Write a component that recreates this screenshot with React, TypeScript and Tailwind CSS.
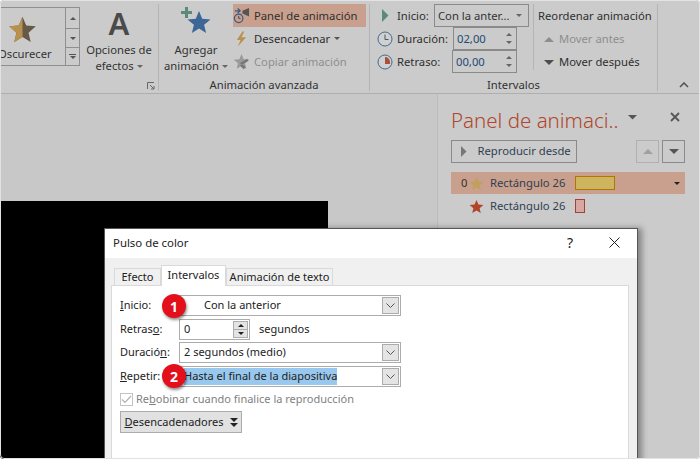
import type { ReactNode } from "react";

const STAR = "M12 1.5l3.1 7.2 7.9.7-6 5.2 1.8 7.7L12 18.2l-6.8 4.1L7 14.6 1 9.4l7.9-.7z";

function Tri({ dir = "down", color = "#555", size = 7 }: { dir?: "down" | "up" | "right"; color?: string; size?: number }) {
  const pts = dir === "down" ? "0,0 8,0 4,4" : dir === "up" ? "0,4 8,4 4,0" : "0,0 4,4 0,8";
  const box = dir === "right" ? "0 0 4 8" : "0 0 8 4";
  return (
    <svg viewBox={box} width={dir === "right" ? size / 2 : size} height={dir === "right" ? size : size / 2} className="inline-block shrink-0">
      <polygon points={pts} fill={color} />
    </svg>
  );
}

function HalfStar() {
  return (
    <svg viewBox="0 0 24 24" width="29" height="29" className="ml-[8px] shrink-0">
      <path d={STAR} fill="#665a46" />
      <path d="M12 1.5L8.9 8.7 1 9.4l6 5.2-1.8 7.7L12 18.2z" fill="#b9914f" />
    </svg>
  );
}

function ClockIcon({ retraso }: { retraso?: boolean }) {
  return (
    <svg viewBox="0 0 16 16" width="16" height="16" className="shrink-0">
      <circle cx="8" cy="8" r="7" fill="#d0d0d0" stroke="#3f6a94" strokeWidth="1" />
      {retraso ? (
        <path d="M8 3a5 5 0 0 1 5 5v2H8z" fill="#a8523c" />
      ) : (
        <path d="M8 3.5V8.5H11.5" fill="none" stroke="#555" strokeWidth="1" />
      )}
    </svg>
  );
}

function SmallBtn({ icon, label, active, muted, caret }: { icon: ReactNode; label: string; active?: boolean; muted?: boolean; caret?: boolean }) {
  return (
    <div className={`flex h-[23px] w-[133px] items-center gap-[4px] ${active ? "bg-[#c9a08d]" : ""} ${muted ? "text-[#8e8e8e]" : "text-[#2f2f2f]"}`}>
      <span className="flex w-[17px] justify-center">{icon}</span>
      <span className="whitespace-nowrap pt-[2px]">{label}</span>
      {caret && <Tri size={6} />}
    </div>
  );
}

function Group({ width, label, children, sep = true }: { width: number; label: string; children: ReactNode; sep?: boolean }) {
  return (
    <div className={`relative flex h-[87px] flex-col ${sep ? "border-r border-[#b4b4b4]" : ""}`} style={{ width }}>
      <div className="flex h-[75px] shrink-0">{children}</div>
      <div className="text-center leading-[12px] text-[#333]">{label}</div>
    </div>
  );
}

function Spin({ value, width }: { value: string; width: number }) {
  return (
    <div className="flex h-[23px] items-center border border-[#8a8a8a] bg-[#cbcbcb] pl-[3px] text-[#1f4a75]" style={{ width }}>
      <span className="flex-1 pt-[2px]">{value}</span>
      <span className="flex w-[14px] flex-col items-center gap-[5px]">
        <Tri dir="up" size={6} color="#666" />
        <Tri size={6} color="#666" />
      </span>
    </div>
  );
}

function Ribbon() {
  return (
    <header className="flex h-[94px] shrink-0 border-b border-[#aeaeae] bg-[#cbcbcb] pt-[4px] text-[11.25px]">
      <Group width={159} label="">
        <div className="mt-[3px] flex h-[59px] w-[66px] flex-col overflow-hidden border-y border-r border-[#8f8f8f] pt-[7px]">
          <HalfStar />
          <span className="mt-[2px] whitespace-nowrap text-[#333] [text-indent:-2px]">Oscurecer</span>
        </div>
        <div className="mt-[3px] flex h-[59px] w-[14px] flex-col border-y border-r border-[#8f8f8f]">
          <span className="flex h-[21px] items-center justify-center border-b border-[#8f8f8f]"><Tri dir="up" size={6} /></span>
          <span className="flex h-[19px] items-center justify-center border-b border-[#8f8f8f]"><Tri size={6} /></span>
          <span className="flex flex-1 flex-col items-center justify-center gap-[1px]"><span className="h-px w-[7px] bg-[#555]" /><Tri size={6} /></span>
        </div>
        <div className="flex w-[78px] flex-col items-center leading-[16px] text-[#333]">
          <span className="flex h-[38px] items-center text-[31px] font-semibold leading-[37px] text-[#4a4a4a]">A</span>
          <span className="whitespace-nowrap">Opciones de</span>
          <span className="flex items-center gap-[3px]">efectos <Tri size={6} color="#666" /></span>
        </div>
        <svg viewBox="0 0 8 8" width="8" height="8" className="absolute left-[147px] top-[78px]">
          <path d="M0.5 7V0.5H7M3 3l4 4M7 4v3H4" fill="none" stroke="#666" strokeWidth="1" />
        </svg>
      </Group>
      <Group width={211} label="Animación avanzada">
        <div className="flex w-[74px] flex-col items-center leading-[16px] text-[#333]">
          <svg viewBox="0 0 32 32" width="32" height="32" className="mb-[4px] mt-[2px]">
            <path d="M19 5l3.2 7.8 8.3.6-6.4 5.3 2 8.2-7.1-4.4-7.1 4.4 2-8.2-6.4-5.3 8.3-.6z" fill="#3b6695" />
            <path d="M5 1h3v4h4v3H8v4H5V8H1V5h4z" fill="#5c8a78" />
          </svg>
          <span>Agregar</span>
          <span className="flex items-center gap-[3px] whitespace-nowrap">animación <Tri size={6} color="#666" /></span>
        </div>
        <div className="flex flex-col">
          <SmallBtn
            active
            label="Panel de animación"
            icon={
              <svg viewBox="0 0 18 18" width="17" height="17">
                <circle cx="6" cy="12" r="4.5" fill="none" stroke="#2f5d8a" strokeWidth="1.3" />
                <path d="M6 9.5V12H8" fill="none" stroke="#444" />
                <path d="M2 4h5M5 1.5L7.5 4 5 6.5" fill="none" stroke="#2f5d8a" strokeWidth="1.3" />
                <path d="M10 4l7-3v9l-7-3z" fill="#555" />
              </svg>
            }
          />
          <SmallBtn
            caret
            label="Desencadenar"
            icon={
              <svg viewBox="0 0 16 16" width="15" height="16">
                <path d="M9 0L3 9h4l-3 7 9-10H8l3-6z" fill="#b9914f" />
              </svg>
            }
          />
          <SmallBtn
            muted
            label="Copiar animación"
            icon={
              <svg viewBox="0 0 24 24" width="17" height="17">
                <path d={STAR} fill="#9a9a9a" />
                <path d="M10 14l10-6 2 3-10 6zM10 18l5 5 3-3-5-5z" fill="#777" />
              </svg>
            }
          />
        </div>
      </Group>
      <Group width={288} label="Intervalos">
        <div className="flex w-[163px] flex-col pl-[7px]">
          <div className="flex h-[23px] items-center">
            <span className="flex w-[20px] justify-start pl-[5px]"><Tri dir="right" size={13} color="#5c8a78" /></span>
            <span className="w-[37px] pt-[2px] text-[#2f2f2f]">Inicio:</span>
            <div className="flex h-[23px] w-[95px] items-center justify-between whitespace-nowrap border border-[#8a8a8a] pl-[3px] pr-[6px] text-[#333]">
              <span className="pt-[2px]">Con la anter...</span><Tri size={6} color="#666" />
            </div>
          </div>
          <div className="flex h-[23px] items-center">
            <span className="w-[20px]"><ClockIcon /></span>
            <span className="w-[56px] pt-[2px] text-[#2f2f2f]">Duración:</span>
            <Spin value="02,00" width={64} />
          </div>
          <div className="flex h-[23px] items-center">
            <span className="w-[20px]"><ClockIcon retraso /></span>
            <span className="w-[55px] pt-[2px] text-[#2f2f2f]">Retraso:</span>
            <Spin value="00,00" width={65} />
          </div>
        </div>
        <div className="h-[66px] border-l border-[#b4b4b4] pl-[4px] text-[#2f2f2f]">
          <div className="flex h-[23px] items-center whitespace-nowrap pt-[2px]">Reordenar animación</div>
          <div className="flex h-[23px] items-center gap-[5px] pl-[6px] pt-[2px] text-[#8e8e8e]"><Tri dir="up" size={10} color="#8e8e8e" />Mover antes</div>
          <div className="flex h-[23px] items-center gap-[5px] pl-[6px] pt-[2px]"><Tri size={10} color="#4d4d4d" />Mover después</div>
        </div>
      </Group>
      <div className="flex flex-1 items-end justify-end pb-[5px] pr-[11px]">
        <svg viewBox="0 0 10 6" width="10" height="6"><path d="M1 5l4-4 4 4" fill="none" stroke="#555" strokeWidth="1.6" /></svg>
      </div>
    </header>
  );
}

function TaskPane() {
  return (
    <aside className="flex w-[263px] shrink-0 flex-col border-l border-[#bcbcbc] bg-[#cbcbcb] pl-[13px] pr-[15px] text-[11.25px] text-[#2f3f52]">
      <div className="relative flex h-[46px] items-center pt-[6px]">
        <span className="whitespace-nowrap text-[20.5px] font-light text-[#b0452a]">Panel de animaci..</span>
        <span className="absolute left-[177px] top-[21px] flex"><Tri size={9} color="#555" /></span>
        <svg viewBox="0 0 10 10" width="10" height="10" className="absolute left-[219px] top-[18px]"><path d="M1 1l8 8M9 1l-8 8" stroke="#555" strokeWidth="1.8" /></svg>
      </div>
      <div className="flex items-center">
        <div className="flex h-[23px] w-[126px] items-center gap-[11px] whitespace-nowrap border border-[#8a8a8a] pl-[9px]">
          <Tri dir="right" size={11} color="#777" />
          <span>Reproducir desde</span>
        </div>
        <div className="ml-[59px] flex h-[23px] w-[23px] items-center justify-center border border-[#b0b0b0]"><Tri dir="up" size={10} color="#a0a0a0" /></div>
        <div className="ml-[3px] flex h-[23px] w-[23px] items-center justify-center border border-[#8a8a8a]"><Tri size={10} color="#555" /></div>
      </div>
      <div className="mt-[9px] flex h-[22px] w-[234px] items-center bg-[#c9a08d]">
        <span className="w-[18px] pl-[10px] text-[#333]">0</span>
        <svg viewBox="0 0 24 24" width="15" height="15" className="shrink-0"><path d={STAR} fill="#c0a05c" /></svg>
        <span className="ml-[6px] w-[85px] whitespace-nowrap">Rectángulo 26</span>
        <span className="h-[14px] w-[40px] border border-[#b37400] bg-[#cdb55f]" />
        <span className="ml-[59px]"><Tri size={6} color="#222" /></span>
      </div>
      <div className="mt-[1px] flex h-[22px] items-center pl-[18px]">
        <svg viewBox="0 0 24 24" width="15" height="15" className="shrink-0"><path d={STAR} fill="#b0452a" /></svg>
        <span className="ml-[6px] w-[85px] whitespace-nowrap">Rectángulo 26</span>
        <span className="h-[14px] w-[10px] border border-[#a8403a] bg-[#d6a8a0]" />
      </div>
    </aside>
  );
}

function Chevron() {
  return (
    <span className="flex h-[17px] w-[17px] items-center justify-center border border-[#acacac] bg-[#e4e4e4]">
      <svg viewBox="0 0 9 5" width="9" height="5"><path d="M.5.5l4 4 4-4" fill="none" stroke="#555" /></svg>
    </span>
  );
}

function Combo({ children, selected }: { children: ReactNode; selected?: boolean }) {
  return (
    <div className="flex h-[21px] w-[222px] items-center justify-between border border-[#acacac] pl-[4px] pr-[1px]">
      <span className={`whitespace-nowrap ${selected ? "bg-[#99c8ee]" : ""}`}>{children}</span>
      <Chevron />
    </div>
  );
}

function Row({ label, children, mb = 3 }: { label: ReactNode; children: ReactNode; mb?: number }) {
  return (
    <div className="flex items-center" style={{ marginBottom: mb }}>
      <span className="w-[59px] whitespace-nowrap">{label}</span>
      {children}
    </div>
  );
}

function Badge({ n, top }: { n: number; top: number }) {
  return (
    <span
      className="absolute left-[162px] flex h-[24px] w-[24px] items-center justify-center rounded-full bg-[#e3101b] text-[14px] font-bold text-white shadow-[1px_2px_3px_rgba(0,0,0,0.45)]"
      style={{ top }}
    >
      {n}
    </span>
  );
}

function Dialog() {
  return (
    <section className="absolute left-[104px] top-[228px] flex h-[240px] w-[534px] flex-col border border-[#555] bg-[#f0f0f0] text-[11px] text-[#222] shadow-[4px_0_6px_rgba(0,0,0,0.35)]">
      <div className="flex h-[29px] shrink-0 items-center justify-between bg-white pb-[2px] pl-[8px] pr-[17px]">
        <span className="text-[11.4px]">Pulso de color</span>
        <div className="flex items-center gap-[36px]">
          <span className="text-[14px] text-[#222]">?</span>
          <svg viewBox="0 0 11 11" width="11" height="11"><path d="M.5.5l10 10M10.5.5l-10 10" stroke="#222" /></svg>
        </div>
      </div>
      <div className="flex h-[27px] shrink-0 items-end pl-[9px]">
        <span className="flex h-[17px] w-[47px] items-center justify-center border border-b-0 border-[#d9d9d9]">Efecto</span>
        <span className="relative z-10 mb-[-1px] flex h-[21px] w-[65px] items-center justify-center border border-b-0 border-[#d9d9d9] bg-white pb-[2px]">Intervalos</span>
        <span className="flex h-[17px] w-[107px] items-center justify-center whitespace-nowrap border border-b-0 border-[#d9d9d9]">Animación de texto</span>
      </div>
      <div className="ml-[6px] h-[200px] w-[518px] border border-[#d9d9d9] bg-white pl-[8px] pt-[9px]">
        <Row label={<><u>I</u>nicio:</>} mb={3}>
          <Combo><span className="pl-[20px]">Con la anterior</span></Combo>
        </Row>
        <Row label={<>Retras<u>o</u>:</>} mb={2}>
          <div className="flex h-[21px] w-[71px] items-center justify-between border border-[#acacac] pl-[4px] pr-[1px]">
            0
            <span className="flex h-[17px] w-[15px] flex-col border border-[#acacac] bg-[#e4e4e4]">
              <span className="flex flex-1 items-center justify-center border-b border-[#acacac]"><Tri dir="up" size={6} color="#222" /></span>
              <span className="flex flex-1 items-center justify-center"><Tri size={6} color="#222" /></span>
            </span>
          </div>
          <span className="ml-[9px]">segundos</span>
        </Row>
        <Row label={<>Duració<u>n</u>:</>} mb={3}>
          <Combo>2 segundos (medio)</Combo>
        </Row>
        <Row label={<><u>R</u>epetir:</>} mb={3}>
          <Combo selected>Hasta el final de la diapositiva</Combo>
        </Row>
        <div className="flex h-[18px] items-center gap-[3px] text-[#7f7f7f]">
          <span className="flex h-[13px] w-[13px] items-center justify-center border border-[#c4c4c4]">
            <svg viewBox="0 0 11 9" width="11" height="9"><path d="M1 4.5l3 3 6-6.5" fill="none" stroke="#b0b0b0" strokeWidth="1.2" /></svg>
          </span>
          <span>Re<u>b</u>obinar cuando finalice la reproducción</span>
        </div>
        <div className="mt-[3px] flex h-[22px] w-[122px] items-center justify-center gap-[6px] border border-[#acacac] bg-[#e1e1e1]">
          <span><u>D</u>esencadenadores</span>
          <svg viewBox="0 0 8 9" width="8" height="9"><path d="M0 0h8L4 4zM0 5h8L4 9z" fill="#222" /></svg>
        </div>
      </div>
    </section>
  );
}

export default function App() {
  return (
    <div className="relative flex h-[459px] w-[700px] flex-col overflow-hidden rounded-[4px] bg-[#c8c8c8] font-['Noto_Sans',sans-serif] text-[11px]">
      <Ribbon />
      <main className="flex min-h-0 flex-1">
        <div className="flex flex-1 flex-col">
          <div className="mt-[107px] h-[258px] w-[328px] bg-black" />
        </div>
        <TaskPane />
      </main>
      <Dialog />
      <Badge n={1} top={294} />
      <Badge n={2} top={364} />
      <div className="pointer-events-none absolute inset-0 rounded-[4px] border border-[#e2e2e2]" />
    </div>
  );
}
